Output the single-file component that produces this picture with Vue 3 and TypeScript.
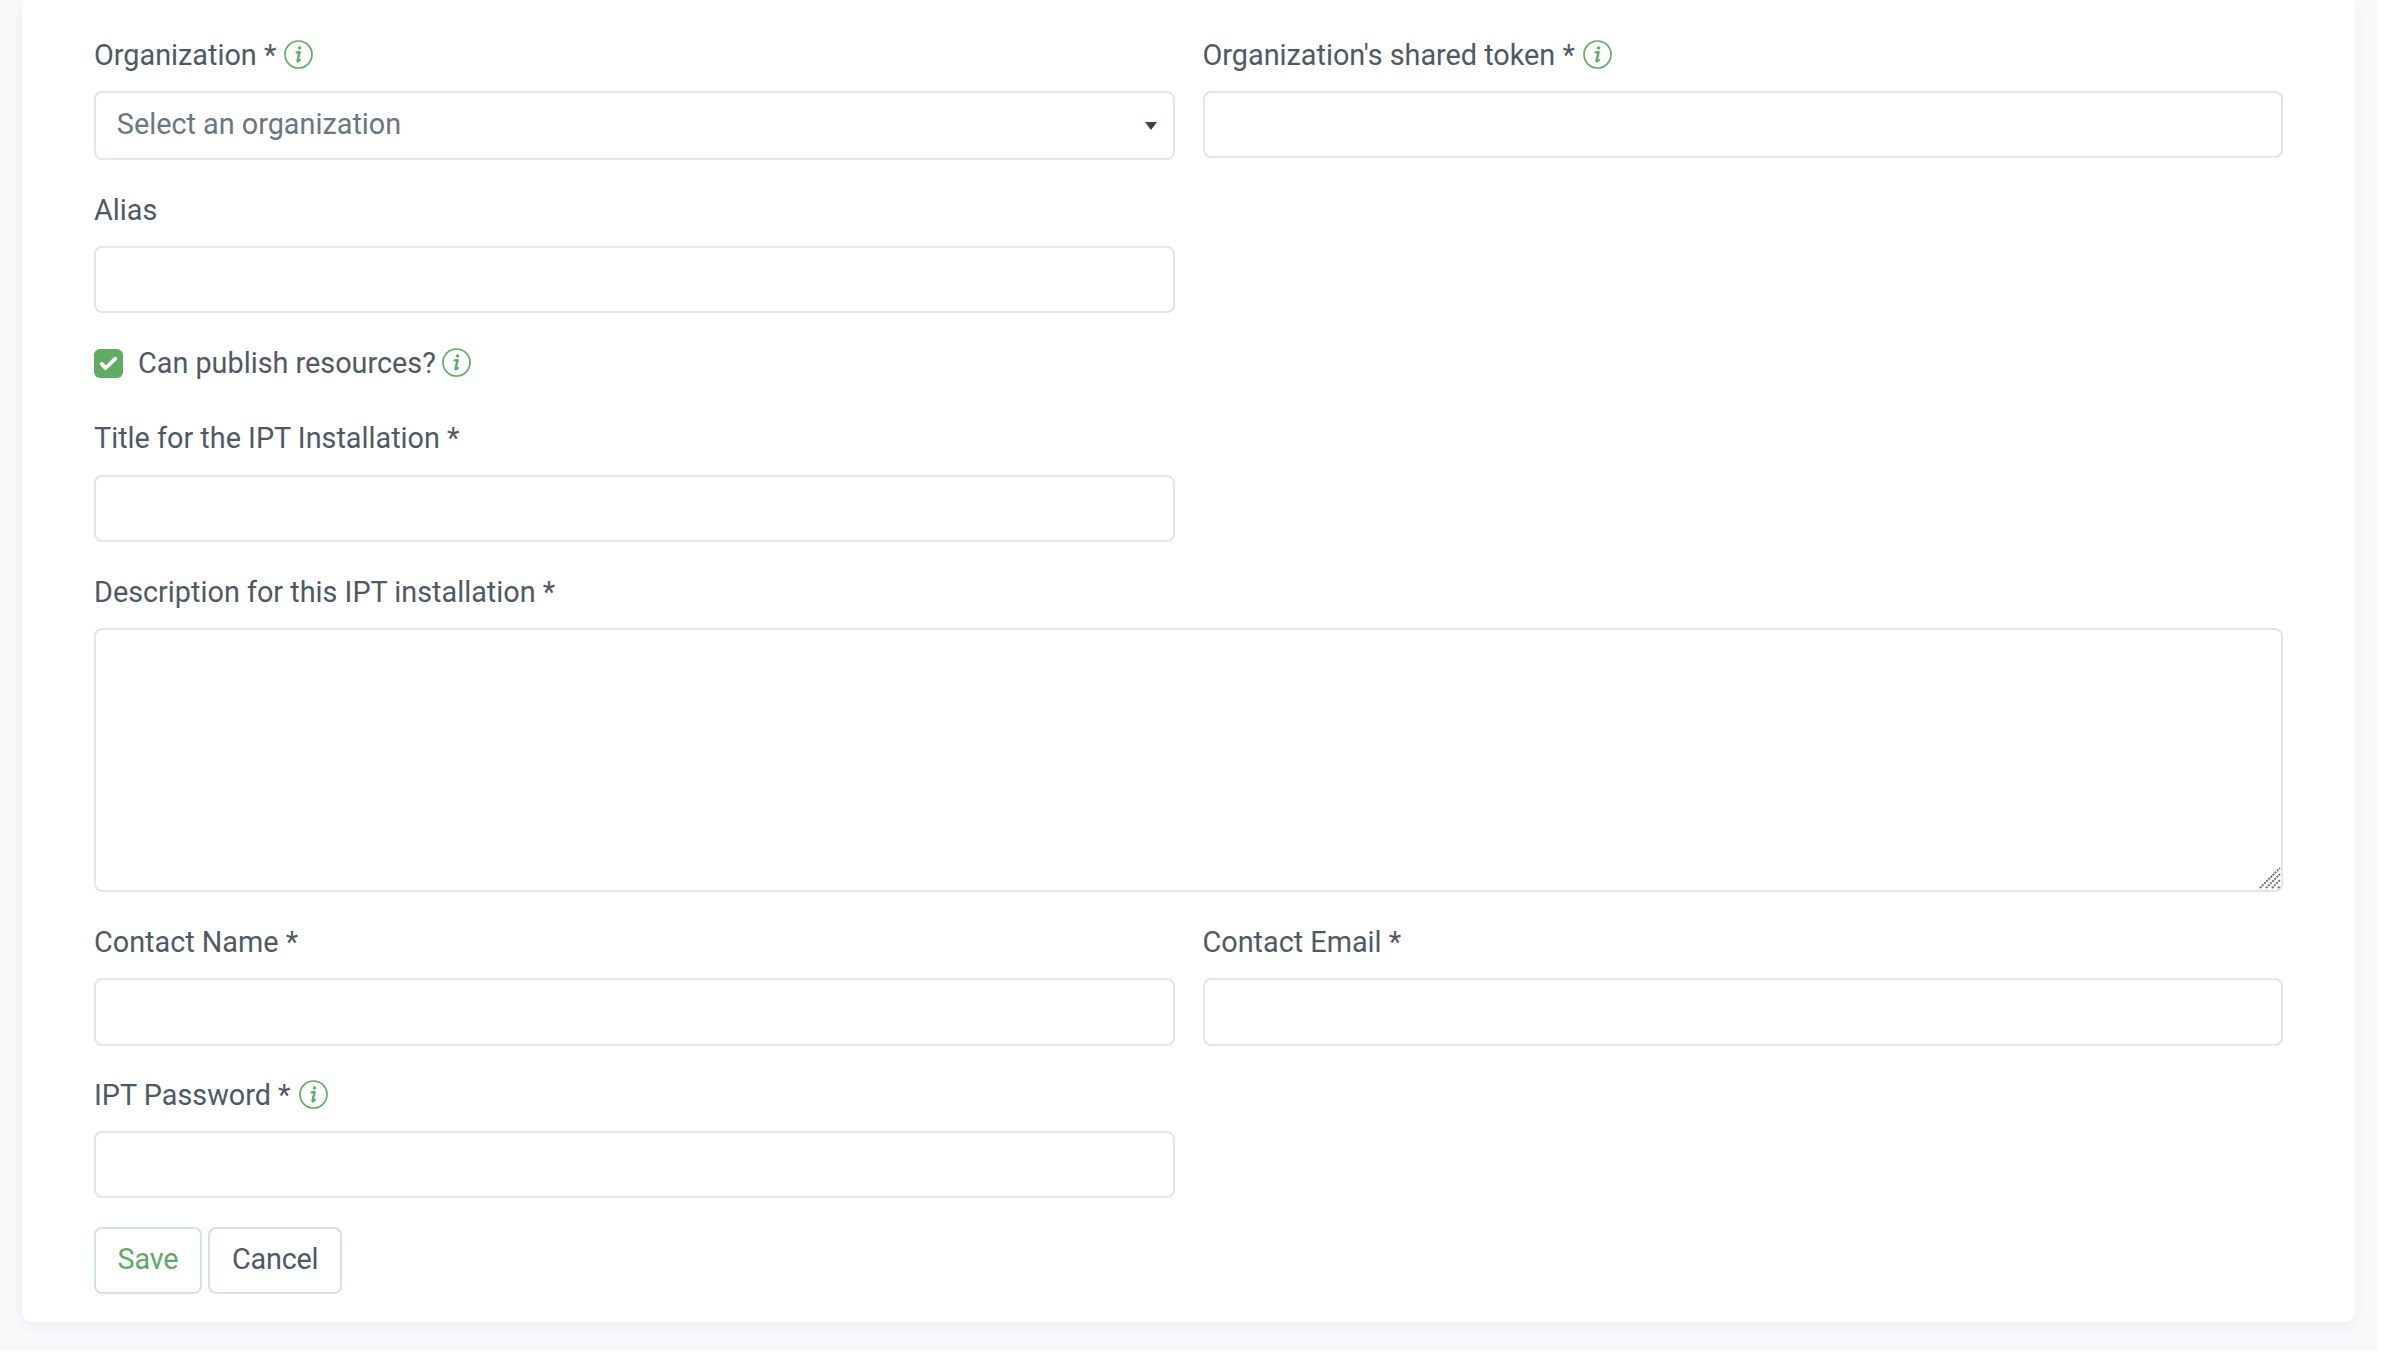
<template>
  <div class="page">
    <form class="card" @submit.prevent>
      <div class="form-row">
        <div class="form-group">
          <label class="form-label">
            <span>Organization *</span>
            <svg class="info" viewBox="0 0 29 29" aria-hidden="true">
              <circle cx="14.5" cy="14.5" r="13.5" />
              <circle class="info__dot" cx="15.6" cy="7.9" r="1.7" />
              <path class="info__stem" d="M12.6 12.4l3-.3-2.1 8.6c-.2.9.8.9 2.3-.7" />
            </svg>
          </label>
          <div class="select-wrap">
            <select class="form-control form-control--select">
              <option>Select an organization</option>
            </select>
            <span class="select-wrap__arrow"></span>
          </div>
        </div>
        <div class="form-group">
          <label class="form-label">
            <span>Organization's shared token *</span>
            <svg class="info" viewBox="0 0 29 29" aria-hidden="true">
              <circle cx="14.5" cy="14.5" r="13.5" />
              <circle class="info__dot" cx="15.6" cy="7.9" r="1.7" />
              <path class="info__stem" d="M12.6 12.4l3-.3-2.1 8.6c-.2.9.8.9 2.3-.7" />
            </svg>
          </label>
          <input class="form-control" type="text" />
        </div>
      </div>

      <div class="form-row">
        <div class="form-group">
          <label class="form-label">Alias</label>
          <input class="form-control" type="text" />
        </div>
      </div>

      <div class="form-check">
        <span class="form-check__box">
          <svg viewBox="0 0 29 29" aria-hidden="true">
            <path d="M7.6 14.8l3.9 4.3 9.8-9.4" />
          </svg>
        </span>
        <span>Can publish resources?</span>
        <svg class="info" viewBox="0 0 29 29" aria-hidden="true">
          <circle cx="14.5" cy="14.5" r="13.5" />
          <circle class="info__dot" cx="15.6" cy="7.9" r="1.7" />
          <path class="info__stem" d="M12.6 12.4l3-.3-2.1 8.6c-.2.9.8.9 2.3-.7" />
        </svg>
      </div>

      <div class="form-row">
        <div class="form-group">
          <label class="form-label">Title for the IPT Installation *</label>
          <input class="form-control" type="text" />
        </div>
      </div>

      <div class="form-group">
        <label class="form-label">Description for this IPT installation *</label>
        <div class="textarea-wrap">
          <textarea class="form-control form-control--area"></textarea>
          <svg class="textarea-wrap__grip" viewBox="0 0 22 22" aria-hidden="true">
            <path d="M1 21L21 1M7 21L21 7M13 21l8-8M19 21l2-2" />
          </svg>
        </div>
      </div>

      <div class="form-row form-row--contact">
        <div class="form-group">
          <label class="form-label">Contact Name *</label>
          <input class="form-control" type="text" />
        </div>
        <div class="form-group">
          <label class="form-label">Contact Email *</label>
          <input class="form-control" type="email" />
        </div>
      </div>

      <div class="form-row">
        <div class="form-group">
          <label class="form-label">
            <span>IPT Password *</span>
            <svg class="info" viewBox="0 0 29 29" aria-hidden="true">
              <circle cx="14.5" cy="14.5" r="13.5" />
              <circle class="info__dot" cx="15.6" cy="7.9" r="1.7" />
              <path class="info__stem" d="M12.6 12.4l3-.3-2.1 8.6c-.2.9.8.9 2.3-.7" />
            </svg>
          </label>
          <input class="form-control" type="password" />
        </div>
      </div>

      <div class="actions">
        <button class="btn btn--save" type="submit">Save</button>
        <button class="btn" type="button">Cancel</button>
      </div>
    </form>
  </div>
</template>

<script setup lang="ts">
</script>

<style>
html,
body {
  background: #fff;
}
</style>

<style scoped>
.page {
  width: 2377px;
  height: 1351px;
  box-sizing: border-box;
  padding: 0 22px;
  background: #f8f9fb;
  font-family: Roboto, "Liberation Sans", sans-serif;
  font-size: 28.8px;
  line-height: 43.2px;
  color: #4f5966;
}

.card {
  box-sizing: border-box;
  height: 1322px;
  padding: 33.6px 72px 0;
  background: #fff;
  border-radius: 0 0 10px 10px;
  box-shadow: 0 4px 14px rgba(40, 50, 70, 0.06);
}

.form-row {
  display: grid;
  grid-template-columns: repeat(2, 1fr);
  column-gap: 28px;
}

.form-row--contact .form-group {
  margin-bottom: 27.4px;
}

.form-group {
  margin-bottom: 28.8px;
}

.form-label {
  display: flex;
  align-items: center;
  gap: 8px;
  height: 44.2px;
  margin-bottom: 13.4px;
}

.form-control {
  display: block;
  box-sizing: border-box;
  width: 100%;
  height: 67.2px;
  padding: 0 21.6px;
  border: 2px solid #e2e5ea;
  border-radius: 8px;
  background: #fff;
  font: inherit;
  color: inherit;
  outline: none;
}

.form-control--select {
  height: 68.4px;
  padding-left: 20.8px;
  padding-bottom: 1px;
  appearance: none;
  color: #6b7683;
}

.form-control--area {
  height: 264px;
  resize: none;
}

.select-wrap,
.textarea-wrap {
  position: relative;
}

.select-wrap__arrow {
  position: absolute;
  top: 31px;
  right: 18px;
  border-top: 8px solid #3c4249;
  border-left: 6.5px solid transparent;
  border-right: 6.5px solid transparent;
}

.textarea-wrap__grip {
  position: absolute;
  right: 2px;
  bottom: 3px;
  width: 22px;
  height: 22px;
  fill: none;
  stroke: #6f6f6f;
  stroke-width: 2;
  stroke-dasharray: 2 1;
}

.info {
  flex: none;
  width: 29px;
  height: 29px;
  margin-top: -2px;
  fill: none;
  stroke: #62ad65;
  stroke-width: 1.7;
}

.info__dot {
  fill: #62ad65;
  stroke: none;
}

.info__stem {
  stroke-width: 2.4;
  stroke-linecap: round;
  stroke-linejoin: round;
}

.form-check {
  display: flex;
  align-items: center;
  height: 44px;
  margin-bottom: 31px;
}

.form-check__box {
  flex: none;
  width: 29px;
  height: 29px;
  margin-right: 15px;
  border-radius: 6px;
  background: #62ab65;
}

.form-check__box svg {
  display: block;
  width: 29px;
  height: 29px;
  fill: none;
  stroke: #fff;
  stroke-width: 3.8;
  stroke-linecap: round;
  stroke-linejoin: round;
}

.form-check .info {
  margin-left: 6px;
}

.actions {
  display: flex;
  gap: 6.4px;
}

.btn {
  box-sizing: border-box;
  height: 67.2px;
  padding: 0 21.6px 2px;
  border: 2px solid #dadee5;
  border-radius: 8px;
  background: #fff;
  font: inherit;
  letter-spacing: -0.2px;
  color: inherit;
}

.btn--save {
  border-color: #d2e7d3;
  color: #5faa62;
}
</style>
